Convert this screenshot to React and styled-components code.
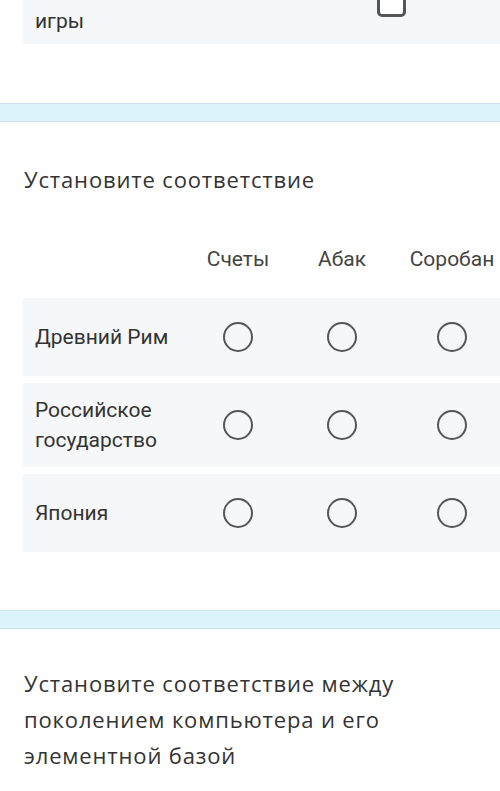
import React from 'react'
import styled, { createGlobalStyle } from 'styled-components'

const GlobalStyle = createGlobalStyle`
  body {
    margin: 0;
    background: #fff;
    overflow-x: hidden;
    font-family: Roboto, "Noto Sans", sans-serif;
    color: #333;
  }
`

const columns = ['Счеты', 'Абак', 'Соробан']
const rows = ['Древний Рим', 'Российское государство', 'Япония']

function App() {
  return (
    <Page>
      <GlobalStyle />
      <OptionCard>
        <OptionLabel>игры</OptionLabel>
        <Checkbox />
      </OptionCard>

      <Band />

      <Question>
        <Title>Установите соответствие</Title>
        <Matrix>
          <HeadRow>
            <span />
            {columns.map((c) => (
              <HeadCell key={c}>{c}</HeadCell>
            ))}
          </HeadRow>
          {rows.map((r) => (
            <MatrixRow key={r}>
              <RowLabel>{r}</RowLabel>
              {columns.map((c) => (
                <Cell key={c}>
                  <Radio />
                </Cell>
              ))}
            </MatrixRow>
          ))}
        </Matrix>
      </Question>

      <Band $top={58} />

      <Question $top={36}>
        <Title $wide>
          Установите соответствие между поколением компьютера и его элементной базой
        </Title>
      </Question>
    </Page>
  )
}

export default App

const Page = styled.div`
  display: flex;
  flex-direction: column;
  width: 500px;
`
const OptionCard = styled.div`
  display: flex;
  justify-content: space-between;
  align-items: flex-start;
  margin-left: 23px;
  padding: 6px 94px 8px 12px;
  height: 30px;
  background: #f6f7f9;
`
const OptionLabel = styled.div`
  font-size: 21px;
  line-height: 30px;
  color: #333;
`
const Checkbox = styled.div`
  width: 23px;
  height: 23px;
  margin-top: -18px;
  border: 3px solid #555;
  border-radius: 5px;
  background: #fff;
`
const Band = styled.div`
  margin-top: ${(p) => p.$top ?? 59}px;
  height: 17px;
  background: #dcf3fb;
  border-top: 1px solid #cde2ea;
  border-bottom: 1px solid #cde2ea;
`
const Question = styled.section`
  padding: ${(p) => p.$top ?? 42}px 0 0 24px;
`
const Title = styled.h2`
  margin: 0;
  font-family: "Open Sans", "Noto Sans", sans-serif;
  font-weight: 400;
  font-size: 22px;
  letter-spacing: 0.85px;
  line-height: ${(p) => (p.$wide ? '36px' : '30px')};
  color: #333;
  max-width: ${(p) => (p.$wide ? '420px' : 'none')};
`
const Matrix = styled.div`
  display: flex;
  flex-direction: column;
  gap: 7px;
  margin: 52px 0 0 -1px;
`
const grid = `
  display: grid;
  grid-template-columns: 163px 104px 104px 116px;
  align-items: center;
`
const HeadRow = styled.div`
  ${grid}
  height: 26px;
  margin-bottom: 19px;
`
const HeadCell = styled.div`
  text-align: center;
  font-size: 21px;
  color: #444;
`
const MatrixRow = styled.div`
  ${grid}
  min-height: 54px;
  padding: 12px 0;
  background: #f6f7f9;
`
const RowLabel = styled.div`
  padding-left: 12px;
  font-size: 21px;
  line-height: 30px;
  color: #333;
`
const Cell = styled.div`
  display: flex;
  justify-content: center;
`
const Radio = styled.div`
  width: 26px;
  height: 26px;
  border: 2.5px solid #555;
  border-radius: 50%;
`
